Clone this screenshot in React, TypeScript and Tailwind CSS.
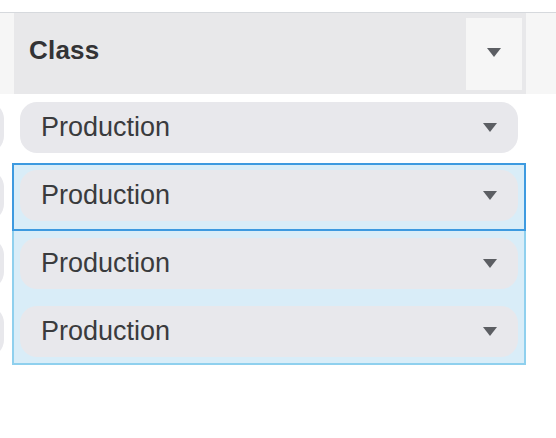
import React from 'react';

function Caret({ className = '' }: { className?: string }) {
  return (
    <svg width="14" height="9" viewBox="0 0 14 9" className={className}>
      <path d="M0 0H14L7 9Z" fill="#5c5e63" />
    </svg>
  );
}

const rows = ['Production', 'Production', 'Production', 'Production'];

export default function App() {
  return (
    <div
      className="w-[556px] h-[438px] bg-white pt-[12px] overflow-hidden"
      style={{ fontFamily: '"Liberation Sans", Arial, sans-serif' }}
    >
      {/* Header */}
      <div className="flex h-[82px] border-t border-[#d6d9dd]">
        <div className="w-[14px] bg-[#f6f6f6]" />
        <div className="w-[512px] bg-[#e8e8ea] flex items-center justify-between pl-[15px] pr-[4px] pt-[5px] pb-[4px]">
          <span className="text-[26px] font-bold text-[#333335] leading-none mb-[8px] tracking-[0.2px]">Class</span>
          <div className="w-[56px] h-full bg-[#f6f6f6] flex items-center justify-center">
            <Caret className="mb-[4px]" />
          </div>
        </div>
        <div className="flex-1 bg-[#f6f6f6]" />
      </div>

      {/* Body */}
      <div className="relative mt-[1px]">
        {rows.map((label, i) => {
          const selected = i > 0;
          const last = i === rows.length - 1;
          return (
            <div key={i} className={`flex ${last ? 'h-[66px]' : 'h-[68px]'}`}>
              <div className="w-[14px]">
                <div className="w-[4px] overflow-hidden mt-[7px]">
                  <div className="w-[40px] h-[51px] -ml-[36px] rounded-[17px] bg-[#e8e8ec]" />
                </div>
              </div>
              <div className={`w-[512px] pl-[6px] pt-[7px] ${selected ? 'bg-[#d9edf8]' : 'bg-white'}`}>
                <div className="w-[498px] h-[51px] rounded-[17px] bg-[#e8e8ec] flex items-center justify-between pl-[21px] pr-[21px]">
                  <span className="text-[27px] text-[#3a3b3d] leading-none">{label}</span>
                  <Caret />
                </div>
              </div>
            </div>
          );
        })}

        {/* Selection range */}
        <div className="absolute left-[12px] top-[68px] w-[514px] h-[202px] border-2 border-[#8fd0ee] pointer-events-none" />
        {/* Active cell */}
        <div className="absolute left-[12px] top-[68px] w-[514px] h-[68px] border-2 border-[#3d9ae0] pointer-events-none" />
      </div>
    </div>
  );
}
